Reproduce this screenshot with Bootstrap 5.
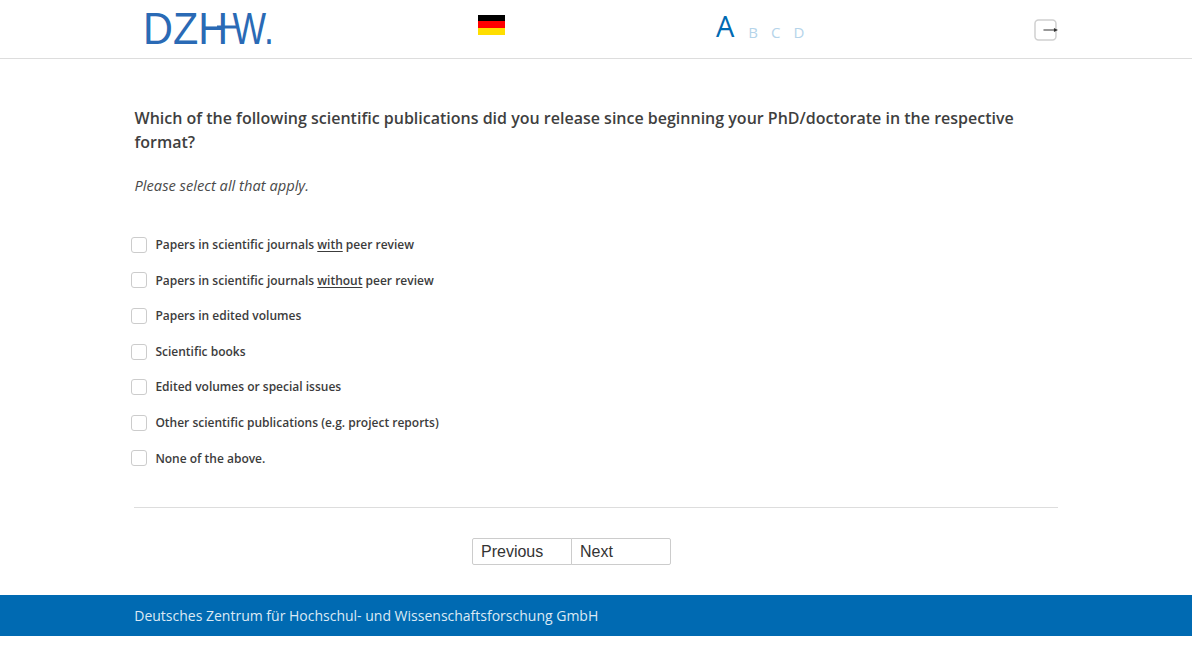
<!DOCTYPE html>
<html lang="en">
  <head>
    <meta charset="UTF-8" />
    <meta name="viewport" content="width=device-width, initial-scale=1.0" />
    <title>DZHW Survey</title>
    <link href="https://cdn.jsdelivr.net/npm/bootstrap@5.3.2/dist/css/bootstrap.min.css" rel="stylesheet" />
    <style>
      body {
        font-family: "Open Sans", sans-serif;
        color: #333;
        background: #fff;
      }
      .page-wrap {
        width: 924px;
        margin: 0 auto;
      }
      .top-bar {
        height: 59px;
        border-bottom: 1px solid #ddd;
      }
      .top-inner {
        height: 58px;
        position: relative;
      }
      .logo {
        display: block;
        margin: 0 0 0 11px;
        overflow: visible;
      }
      .logo text {
        font-family: "Liberation Sans", sans-serif;
        font-weight: 400;
        font-size: 45px;
        fill: #2a6ab5;
      }
      .flag {
        display: block;
        width: 27px;
        height: 20px;
        margin: 15px 0 0 203px;
        background: linear-gradient(#000 32%, #f00 32%, #f00 66%, #ffde00 66%);
      }
      .modules {
        margin-left: 211px;
        width: 319px;
        color: #b5d4ea;
        font-size: 15px;
        line-height: 19px;
        gap: 13px;
        padding-top: 9px;
      }
      .modules .cur {
        color: #006ab2;
        font-size: 29px;
        font-weight: 500;
        line-height: 34px;
        margin-right: 1px;
      }
      .modules .lvl {
        position: relative;
        top: -1px;
      }
      .exit-btn {
        display: block;
        margin-top: 19px;
        width: 24px;
        height: 22px;
      }
      .question {
        font-size: 16px;
        font-weight: 600;
        line-height: 24px;
        color: #3f3f3f;
        margin: 47px 0 0;
        padding-left: 0.5px;
      }
      .hint {
        font-size: 14.7px;
        font-style: italic;
        line-height: 20px;
        color: #4a4a4a;
        margin: 21px 0 0;
        padding-left: 0.5px;
      }
      .answers {
        margin: 32px 0 0 -3px;
      }
      .answer-row {
        height: 35.6px;
        font-size: 12px;
        font-weight: 600;
        color: #3c3c3c;
      }
      .answer-row .answer-text {
        padding-top: 0.4px;
      }
      .answer-box {
        width: 16px;
        height: 16px;
        border: 1px solid #ccc;
        border-radius: 3px;
        margin-right: 8.4px;
        flex-shrink: 0;
      }
      .answer-row u {
        text-underline-offset: 2px;
      }
      .rule {
        border-top: 1px solid #ddd;
        margin-top: 30.5px;
      }
      .pager {
        margin: 30px 0 0 338px;
      }
      .pager button {
        width: 100px;
        height: 27px;
        padding: 1px 0 0 8px;
        text-align: left;
        font-family: "Liberation Sans", sans-serif;
        font-size: 16px;
        color: #333;
        background: #fff;
        border: 1px solid #ccc;
        border-radius: 2px 0 0 2px;
      }
      .pager button + button {
        margin-left: -1px;
        border-radius: 0 2px 2px 0;
      }
      .foot-bar {
        margin-top: 30px;
        height: 41px;
        background: #006ab2;
        color: #dbe9f4;
        font-size: 14px;
        line-height: 41px;
        padding-left: 0.5px;
      }
    </style>
  </head>
  <body>
    <!-- Header -->
    <header class="top-bar">
      <div class="page-wrap top-inner d-flex align-items-start">
        <svg class="logo" width="130" height="58" viewBox="0 0 130 58" role="img" aria-label="DZHW">
          <text transform="translate(-2 44) scale(.92 1)">DZH</text>
          <text transform="translate(87.500 44) scale(.79 1)">W.</text>
          <path d="M72 27h21" stroke="#2a6ab5" stroke-width="3" fill="none" />
        </svg>
        <span class="flag"></span>
        <div class="modules d-flex align-items-end">
          <span class="cur">A</span><span class="lvl">B</span><span class="lvl">C</span><span class="lvl">D</span>
        </div>
        <svg class="exit-btn" viewBox="0 0 24 22" aria-label="Exit">
          <rect x="1" y="1" width="21" height="20" rx="3.500" fill="#fff" stroke="#d0d0d0" stroke-width="1.500" />
          <path d="M9.500 11h11" stroke="#333" stroke-width="1" fill="none" />
          <path d="M20 9l4 2-4 2z" fill="#333" />
        </svg>
      </div>
    </header>

    <!-- Question -->
    <main class="page-wrap">
      <p class="question">Which of the following scientific publications did you release since beginning your PhD/doctorate in the respective format?</p>
      <p class="hint">Please select all that apply.</p>
      <div class="answers" id="answers"></div>
      <div class="rule"></div>
      <div class="pager d-flex">
        <button type="button">Previous</button>
        <button type="button">Next</button>
      </div>
    </main>

    <footer class="foot-bar">
      <div class="page-wrap">Deutsches Zentrum für Hochschul- und Wissenschaftsforschung GmbH</div>
    </footer>

    <script src="https://cdn.jsdelivr.net/npm/bootstrap@5.3.2/dist/js/bootstrap.bundle.min.js"></script>
    <script>
      const answers = [
        "Papers in scientific journals <u>with</u> peer review",
        "Papers in scientific journals <u>without</u> peer review",
        "Papers in edited volumes",
        "Scientific books",
        "Edited volumes or special issues",
        "Other scientific publications (e.g. project reports)",
        "None of the above.",
      ];
      document.getElementById("answers").innerHTML = answers
        .map((a) => `<div class="answer-row d-flex align-items-center"><span class="answer-box"></span><span class="answer-text">${a}</span></div>`)
        .join("");
    </script>
  </body>
</html>
